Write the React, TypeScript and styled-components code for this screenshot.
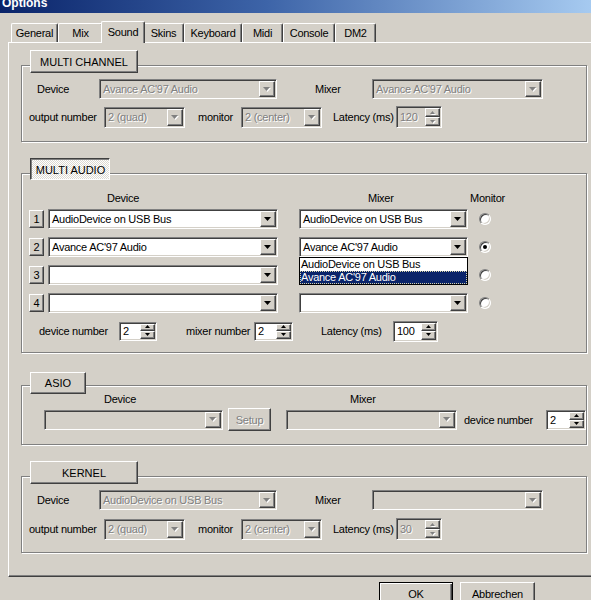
import React from 'react';
import styled, { createGlobalStyle, css } from 'styled-components';

const FACE = '#d4d0c8';
const SHADOW = '#808080';
const DARK = '#404040';
const HI = '#ffffff';

const GlobalStyle = createGlobalStyle`
  html, body { margin: 0; padding: 0; background: ${FACE}; }
  body { font-family: "Liberation Sans", Arial, sans-serif; }
`;

const raised = css`
  background: ${FACE};
  border: 1px solid;
  border-color: ${HI} ${DARK} ${DARK} ${HI};
  box-shadow: inset -1px -1px 0 ${SHADOW};
`;

const sunken = css`
  border: 1px solid;
  border-color: ${SHADOW} ${HI} ${HI} ${SHADOW};
  box-shadow: inset 1px 1px 0 ${DARK}, inset -1px -1px 0 ${FACE};
`;

const disabledText = css`
  color: ${SHADOW};
  text-shadow: 1px 1px 0 ${HI};
`;

const Window = styled.div`
  width: 591px;
  height: 600px;
  overflow: hidden;
  background: ${FACE};
  font-size: 11px;
  letter-spacing: -0.25px;
  color: #000;
  display: flex;
  flex-direction: column;
`;

const TitleBar = styled.div`
  height: 13px;
  flex: none;
  overflow: hidden;
  background: linear-gradient(90deg, #0a246a 0%, #3d64a8 45%, #a6caf0 100%);
`;

const TitleText = styled.div`
  color: #fff;
  font-weight: bold;
  font-size: 12px;
  letter-spacing: 0;
  line-height: 13px;
  margin-top: -3px;
  padding-left: 2px;
`;

const TabStrip = styled.div`
  display: flex;
  align-items: flex-end;
  padding-left: 11px;
  margin-top: 8px;
  position: relative;
  z-index: 2;
  flex: none;
`;

const Tab = styled.div<{ $w: number; $active?: boolean }>`
  box-sizing: border-box;
  flex: none;
  width: ${(p) => p.$w}px;
  height: ${(p) => (p.$active ? 22 : 19)}px;
  margin: 0 ${(p) => (p.$active ? -2 : 0)}px ${(p) => (p.$active ? -1 : 0)}px;
  position: relative;
  z-index: ${(p) => (p.$active ? 2 : 1)};
  background: ${FACE};
  border-top: 1px solid ${HI};
  border-left: 1px solid ${HI};
  border-right: 1px solid ${DARK};
  box-shadow: inset -1px 0 0 ${SHADOW};
  border-radius: 2px 2px 0 0;
  display: flex;
  align-items: center;
  justify-content: center;
  padding-bottom: ${(p) => (p.$active ? 2 : 0)}px;
  white-space: nowrap;
`;

const TabPanel = styled.div`
  box-sizing: border-box;
  flex: none;
  margin-left: 8px;
  width: 600px;
  height: 535px;
  border-top: 1px solid ${HI};
  border-left: 1px solid ${HI};
  border-bottom: 1px solid ${DARK};
  box-shadow: inset 0 -1px 0 ${SHADOW};
  padding: 7px 0 0 12px;
  display: flex;
  flex-direction: column;
`;

const GroupWrap = styled.section<{ $mt: number }>`
  display: flex;
  flex-direction: column;
  align-items: flex-start;
  margin-top: ${(p) => p.$mt}px;
`;

const GroupHeader = styled.div<{ $w: number; $h: number; $ov: number; $pressed?: boolean }>`
  box-sizing: border-box;
  position: relative;
  z-index: 1;
  width: ${(p) => p.$w}px;
  height: ${(p) => p.$h}px;
  margin-left: 9px;
  margin-bottom: -${(p) => p.$ov}px;
  display: flex;
  align-items: center;
  justify-content: center;
  white-space: nowrap;
  letter-spacing: 0;
  ${(p) =>
    p.$pressed
      ? css`
          background: repeating-conic-gradient(#ffffff 0 25%, #dcd9d2 0 50%) 0 0 / 2px 2px;
          border: 1px solid;
          border-color: ${DARK} ${HI} ${HI} ${DARK};
          box-shadow: inset 1px 1px 0 ${SHADOW};
          padding: 1px 0 0 1px;
        `
      : raised}
`;

const GroupBox = styled.div<{ $h: number }>`
  box-sizing: border-box;
  width: 566px;
  height: ${(p) => p.$h}px;
  border: 1px solid ${SHADOW};
  box-shadow: inset 1px 1px 0 ${HI}, 1px 1px 0 ${HI};
  display: flex;
  flex-direction: column;
`;

const Row = styled.div<{ $mt: number; $h: number }>`
  display: flex;
  align-items: center;
  height: ${(p) => p.$h}px;
  margin-top: ${(p) => p.$mt}px;
  flex: none;
`;

const Label = styled.span<{ $ml: number; $w: number }>`
  flex: none;
  margin-left: ${(p) => p.$ml}px;
  width: ${(p) => p.$w}px;
  white-space: nowrap;
`;

const ComboBox = styled.div<{ $w: number; $h: number; $ml: number; $disabled?: boolean }>`
  position: relative;
  box-sizing: border-box;
  flex: none;
  width: ${(p) => p.$w}px;
  height: ${(p) => p.$h}px;
  margin-left: ${(p) => p.$ml}px;
  display: flex;
  align-items: stretch;
  padding: 1px;
  background: ${(p) => (p.$disabled ? FACE : '#fff')};
  ${sunken}
`;

const FieldText = styled.span<{ $disabled?: boolean }>`
  flex: 1;
  min-width: 0;
  display: flex;
  align-items: center;
  padding-left: 2px;
  white-space: nowrap;
  overflow: hidden;
  ${(p) => (p.$disabled ? disabledText : '')}
`;

const DropButton = styled.div`
  box-sizing: border-box;
  flex: none;
  width: 16px;
  display: flex;
  align-items: center;
  justify-content: center;
  ${raised}
`;

const SpinButtons = styled.div`
  flex: none;
  width: 15px;
  display: flex;
  flex-direction: column;
`;

const SpinBtn = styled.div`
  box-sizing: border-box;
  flex: 1;
  display: flex;
  align-items: center;
  justify-content: center;
  ${raised}
`;

const NumButton = styled.div<{ $ml: number }>`
  box-sizing: border-box;
  flex: none;
  width: 15px;
  height: 18px;
  margin-left: ${(p) => p.$ml}px;
  display: flex;
  align-items: center;
  justify-content: center;
  ${raised}
`;

const Radio = styled.span<{ $ml: number; $checked?: boolean }>`
  box-sizing: border-box;
  flex: none;
  width: 12px;
  height: 12px;
  margin-left: ${(p) => p.$ml}px;
  border-radius: 50%;
  background: #fff;
  border: 1px solid;
  border-color: ${SHADOW} ${HI} ${HI} ${SHADOW};
  box-shadow: inset 1px 1px 0 ${DARK}, inset -1px -1px 0 ${FACE};
  display: flex;
  align-items: center;
  justify-content: center;
  &::after {
    content: '';
    width: 4px;
    height: 4px;
    border-radius: 50%;
    background: #000;
    display: ${(p) => (p.$checked ? 'block' : 'none')};
  }
`;

const PushButton = styled.div<{ $w: number; $h: number; $ml?: number; $default?: boolean; $disabled?: boolean }>`
  box-sizing: border-box;
  flex: none;
  width: ${(p) => p.$w}px;
  height: ${(p) => p.$h}px;
  margin-left: ${(p) => p.$ml ?? 0}px;
  display: flex;
  align-items: center;
  justify-content: center;
  background: ${FACE};
  white-space: nowrap;
  ${(p) =>
    p.$default
      ? css`
          border: 1px solid #000;
          box-shadow: inset 1px 1px 0 ${HI}, inset -1px -1px 0 ${DARK}, inset -2px -2px 0 ${SHADOW};
        `
      : raised}
  ${(p) => (p.$disabled ? disabledText : '')}
`;

const DropList = styled.div<{ $w: number }>`
  position: absolute;
  left: -1px;
  top: calc(100% + 1px);
  width: ${(p) => p.$w}px;
  box-sizing: border-box;
  border: 1px solid #000;
  background: #fff;
  z-index: 5;
`;

const DropItem = styled.div<{ $selected?: boolean }>`
  height: 13px;
  line-height: 13px;
  padding-left: 1px;
  white-space: nowrap;
  background: ${(p) => (p.$selected ? '#0a246a' : '#fff')};
  color: ${(p) => (p.$selected ? '#fff' : '#000')};
  outline: ${(p) => (p.$selected ? '1px dotted #d8d4a8' : 'none')};
  outline-offset: -1px;
`;

const ButtonBar = styled.div`
  display: flex;
  justify-content: flex-end;
  padding-right: 56px;
  margin-top: 5px;
  flex: none;
`;

function Arrow({ up, w, h, disabled }: { up?: boolean; w: number; h: number; disabled?: boolean }) {
  const pts = up ? `0,${h} ${w},${h} ${w / 2},0` : `0,0 ${w},0 ${w / 2},${h}`;
  return (
    <svg width={w + 1} height={h + 1} viewBox={`0 0 ${w + 1} ${h + 1}`}>
      {disabled && <polygon points={pts} fill="#fff" transform="translate(1,1)" />}
      <polygon points={pts} fill={disabled ? SHADOW : '#000'} />
    </svg>
  );
}

type ComboProps = {
  w: number;
  h?: number;
  ml?: number;
  value?: string;
  disabled?: boolean;
  children?: React.ReactNode;
};

function Combo({ w, h = 20, ml = 0, value = '', disabled, children }: ComboProps) {
  return (
    <ComboBox $w={w} $h={h} $ml={ml} $disabled={disabled}>
      <FieldText $disabled={disabled}>{value}</FieldText>
      <DropButton>
        <Arrow w={7} h={4} disabled={disabled} />
      </DropButton>
      {children}
    </ComboBox>
  );
}

function Spin({ w, h = 20, ml = 0, value, disabled }: ComboProps) {
  return (
    <ComboBox $w={w} $h={h} $ml={ml} $disabled={disabled}>
      <FieldText $disabled={disabled}>{value}</FieldText>
      <SpinButtons>
        <SpinBtn>
          <Arrow up w={5} h={3} disabled={disabled} />
        </SpinBtn>
        <SpinBtn>
          <Arrow w={5} h={3} disabled={disabled} />
        </SpinBtn>
      </SpinButtons>
    </ComboBox>
  );
}

type ChannelProps = {
  device: string;
  mixer: string;
  latency: string;
  gap: number;
};

function ChannelFields({ device, mixer, latency, gap }: ChannelProps) {
  return (
    <>
      <Row $mt={13} $h={20}>
        <Label $ml={15} $w={62}>Device</Label>
        <Combo w={178} h={20} value={device} disabled />
        <Label $ml={38} $w={57}>Mixer</Label>
        <Combo w={171} h={20} value={mixer} disabled />
      </Row>
      <Row $mt={gap} $h={22}>
        <Label $ml={7} $w={75}>output number</Label>
        <Combo w={81} h={21} value="2 (quad)" disabled />
        <Label $ml={13} $w={43}>monitor</Label>
        <Combo w={81} h={21} value="2 (center)" disabled />
        <Label $ml={11} $w={63}>Latency (ms)</Label>
        <Spin w={46} h={22} value={latency} disabled />
      </Row>
    </>
  );
}

const tabs = [
  { name: 'General', w: 47 },
  { name: 'Mix', w: 45 },
  { name: 'Sound', w: 44, active: true },
  { name: 'Skins', w: 41 },
  { name: 'Keyboard', w: 58 },
  { name: 'Midi', w: 41 },
  { name: 'Console', w: 52 },
  { name: 'DM2', w: 41 },
];

const audioRows = [
  { device: 'AudioDevice on USB Bus', mixer: 'AudioDevice on USB Bus' },
  { device: "Avance AC'97 Audio", mixer: "Avance AC'97 Audio" },
  { device: '', mixer: '' },
  { device: '', mixer: '' },
];

export default function App() {
  return (
    <>
      <GlobalStyle />
      <Window>
        <TitleBar>
          <TitleText>Options</TitleText>
        </TitleBar>
        <TabStrip>
          {tabs.map((t) => (
            <Tab key={t.name} $w={t.w} $active={t.active}>
              {t.name}
            </Tab>
          ))}
        </TabStrip>
        <TabPanel>
          <GroupWrap $mt={0}>
            <GroupHeader $w={108} $h={23} $ov={8}>MULTI CHANNEL</GroupHeader>
            <GroupBox $h={77}>
              <ChannelFields
                device="Avance AC'97 Audio"
                mixer="Avance AC'97 Audio"
                latency="120"
                gap={7}
              />
            </GroupBox>
          </GroupWrap>

          <GroupWrap $mt={16}>
            <GroupHeader $w={80} $h={22} $ov={7} $pressed>MULTI AUDIO</GroupHeader>
            <GroupBox $h={180}>
              <Row $mt={17} $h={14}>
                <Label $ml={85} $w={261}>Device</Label>
                <Label $ml={0} $w={102}>Mixer</Label>
                <Label $ml={0} $w={50}>Monitor</Label>
              </Row>
              {audioRows.map((r, i) => (
                <Row key={i} $mt={i === 0 ? 4 : 8} $h={20}>
                  <NumButton $ml={7}>{i + 1}</NumButton>
                  <Combo w={230} ml={4} value={r.device} />
                  <Combo w={169} ml={21} value={r.mixer}>
                    {i === 1 && (
                      <DropList $w={169}>
                        <DropItem>AudioDevice on USB Bus</DropItem>
                        <DropItem $selected>Avance AC'97 Audio</DropItem>
                      </DropList>
                    )}
                  </Combo>
                  <Radio $ml={11} $checked={i === 1} />
                </Row>
              ))}
              <Row $mt={7} $h={22}>
                <Label $ml={17} $w={80}>device number</Label>
                <Spin w={38} h={19} value="2" />
                <Label $ml={29} $w={68}>mixer number</Label>
                <Spin w={39} h={19} value="2" />
                <Label $ml={28} $w={72}>Latency (ms)</Label>
                <Spin w={45} h={21} value="100" />
              </Row>
            </GroupBox>
          </GroupWrap>

          <GroupWrap $mt={19}>
            <GroupHeader $w={56} $h={22} $ov={9}>ASIO</GroupHeader>
            <GroupBox $h={60}>
              <Row $mt={6} $h={14}>
                <Label $ml={82} $w={246}>Device</Label>
                <Label $ml={0} $w={40}>Mixer</Label>
              </Row>
              <Row $mt={2} $h={23}>
                <Combo w={179} ml={22} h={20} disabled />
                <PushButton $w={43} $h={23} $ml={5} $disabled>Setup</PushButton>
                <Combo w={171} ml={15} h={20} disabled />
                <Label $ml={7} $w={82}>device number</Label>
                <Spin w={40} h={20} value="2" />
              </Row>
            </GroupBox>
          </GroupWrap>

          <GroupWrap $mt={16}>
            <GroupHeader $w={108} $h={23} $ov={8}>KERNEL</GroupHeader>
            <GroupBox $h={77}>
              <ChannelFields device="AudioDevice on USB Bus" mixer="" latency="30" gap={8} />
            </GroupBox>
          </GroupWrap>
        </TabPanel>
        <ButtonBar>
          <PushButton $w={74} $h={23} $default>OK</PushButton>
          <PushButton $w={75} $h={23} $ml={7}>Abbrechen</PushButton>
        </ButtonBar>
      </Window>
    </>
  );
}
